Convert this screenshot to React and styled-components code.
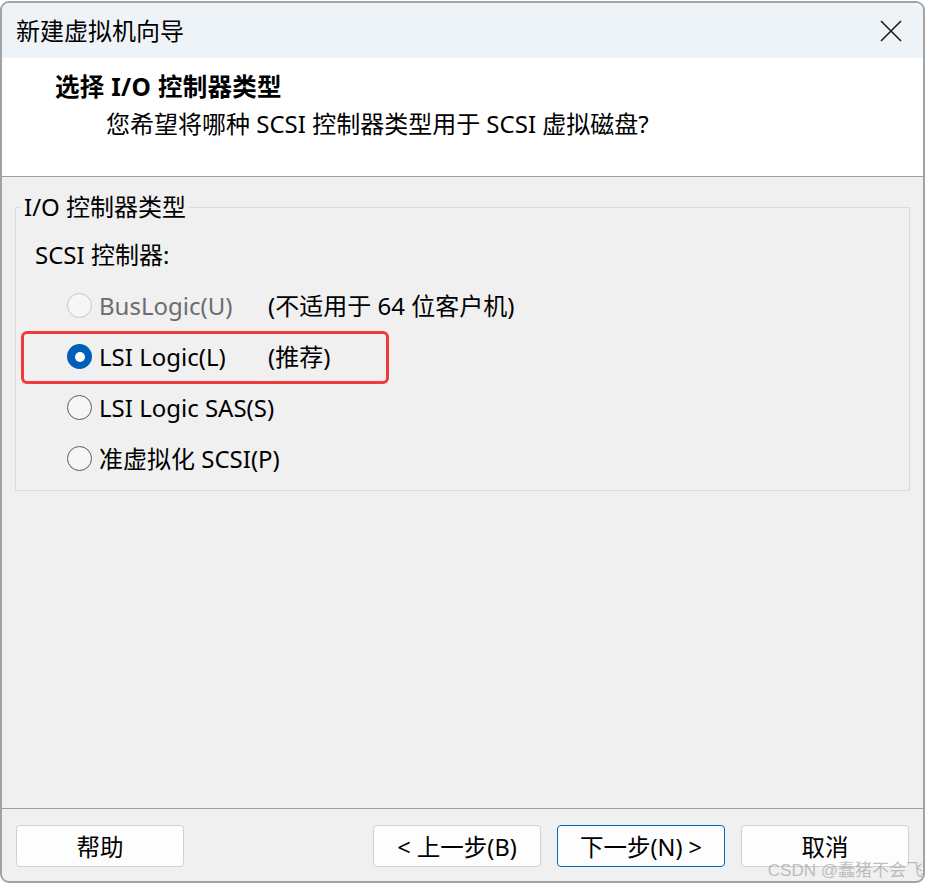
import styled, { createGlobalStyle } from "styled-components";

const Global = createGlobalStyle`
  html, body {
    margin: 0;
    padding: 0;
    background: #ffffff;
  }
  body {
    font-family: "Noto Sans", "Noto Sans CJK SC", sans-serif;
    color: #000;
  }
`

const Window = styled.div`
  box-sizing: border-box;
  width: 925px;
  height: 882px;
  margin-top: 1px;
  border: 2px solid #a3a3a3;
  border-radius: 9px;
  overflow: hidden;
  display: flex;
  flex-direction: column;
  background: #f0f0f0;
  position: relative;
`

const TitleBar = styled.div`
  height: 55px;
  background: #eef3f8;
  display: flex;
  align-items: center;
  justify-content: space-between;
  padding: 0 20px 0 14px;
  flex-shrink: 0;
`

const Title = styled.div`
  font-size: 24px;
  line-height: 28px;
`

const Close = styled.div`
  width: 24px;
  height: 24px;
  display: flex;
  align-items: center;
  justify-content: center;
`

const Header = styled.div`
  height: 119px;
  background: #ffffff;
  border-bottom: 1px solid #a0a0a0;
  padding: 14px 0 0 53px;
  box-sizing: border-box;
  flex-shrink: 0;
`

const Heading = styled.div`
  font-size: 24.5px;
  font-weight: bold;
  line-height: 30px;
  letter-spacing: 0.3px;
`

const SubHeading = styled.div`
  font-size: 24px;
  line-height: 30px;
  margin-top: 7px;
  padding-left: 51px;
  white-space: nowrap;
`

const Body = styled.div`
  flex: 1;
  padding: 17px 13px 0 13px;
`

const Group = styled.fieldset`
  margin: 0;
  border: 1px solid #dcdcdc;
  padding: 0 0 6px 19px;
`

const Legend = styled.legend`
  font-size: 24px;
  line-height: 26px;
  padding: 0 3px;
  margin-left: -14px;
`

const SectionLabel = styled.div`
  font-size: 24px;
  line-height: 26px;
  margin-top: 22px;
  margin-bottom: 12px;
`

const Row = styled.div`
  position: relative;
  height: 51px;
  display: flex;
  align-items: center;
  padding-left: 32px;
  font-size: 24px;
  white-space: nowrap;
  color: ${p => (p.disabled ? "#6d6d6d" : "#000")};

  ${p => p.marked && `
    &::after {
      content: "";
      position: absolute;
      left: -14px;
      top: 0;
      width: 368px;
      height: 53px;
      box-sizing: border-box;
      border: 3px solid #f03a3d;
      border-radius: 6px;
    }
  `}
`

const Radio = styled.span`
  box-sizing: border-box;
  width: 25px;
  height: 25px;
  border-radius: 50%;
  flex-shrink: 0;
  display: flex;
  align-items: center;
  justify-content: center;
  background: ${p => (p.checked ? "#005fb8" : "#f6f6f6")};
  border: ${p =>
    p.checked ? "none" : p.disabled ? "1.5px solid #c6c6c6" : "1.5px solid #5a5a5a"};

  &::before {
    content: "";
    display: ${p => (p.checked ? "block" : "none")};
    width: 10px;
    height: 10px;
    border-radius: 50%;
    background: #ffffff;
  }
`

const RadioText = styled.span`
  min-width: 169px;
  margin-left: 7px;
  line-height: 26px;
`

const Note = styled.span`
  color: #000;
  line-height: 26px;
`

const Footer = styled.div`
  height: 73px;
  flex-shrink: 0;
  border-top: 1px solid #a0a0a0;
  display: flex;
  align-items: flex-start;
  padding: 16px 14px 0 14px;
  box-sizing: border-box;
  gap: 16px;
  position: relative;
`

const Spacer = styled.div`
  flex: 1;
`

const Button = styled.div`
  box-sizing: border-box;
  width: 168px;
  height: 42px;
  background: #fdfdfd;
  border: 1px solid ${p => (p.primary ? "#0067c0" : "#d0d0d0")};
  border-radius: 4px;
  display: flex;
  align-items: center;
  justify-content: center;
  font-size: 23.5px;
  white-space: nowrap;
`

const Watermark = styled.div`
  position: absolute;
  right: 0px;
  bottom: 0px;
  font-family: "Liberation Sans", "Noto Sans CJK SC", sans-serif;
  font-size: 17px;
  line-height: 20px;
  color: rgba(170, 170, 170, 0.75);
  white-space: nowrap;
`

const options = [
  { label: "BusLogic(U)", note: "(不适用于 64 位客户机)", disabled: true },
  { label: "LSI Logic(L)", note: "(推荐)", checked: true, marked: true },
  { label: "LSI Logic SAS(S)" },
  { label: "准虚拟化 SCSI(P)" },
]

const App = () => {
  return (
    <>
      <Global />
      <Window>
        <TitleBar>
          <Title>新建虚拟机向导</Title>
          <Close>
            <svg width="22" height="22" viewBox="0 0 22 22">
              <path d="M1 1L21 21M21 1L1 21" stroke="#1b1b1b" strokeWidth="1.6" />
            </svg>
          </Close>
        </TitleBar>

        <Header>
          <Heading>选择 I/O 控制器类型</Heading>
          <SubHeading>您希望将哪种 SCSI 控制器类型用于 SCSI 虚拟磁盘?</SubHeading>
        </Header>

        <Body>
          <Group>
            <Legend>I/O 控制器类型</Legend>
            <SectionLabel>SCSI 控制器:</SectionLabel>
            {options.map(o => (
              <Row key={o.label} disabled={o.disabled} marked={o.marked}>
                <Radio checked={o.checked} disabled={o.disabled} />
                <RadioText>{o.label}</RadioText>
                {o.note && <Note>{o.note}</Note>}
              </Row>
            ))}
          </Group>
        </Body>

        <Footer>
          <Button>帮助</Button>
          <Spacer />
          <Button>&lt; 上一步(B)</Button>
          <Button primary>下一步(N) &gt;</Button>
          <Button>取消</Button>
          <Watermark>CSDN @蠢猪不会飞</Watermark>
        </Footer>
      </Window>
    </>
  )
}

export default App;
